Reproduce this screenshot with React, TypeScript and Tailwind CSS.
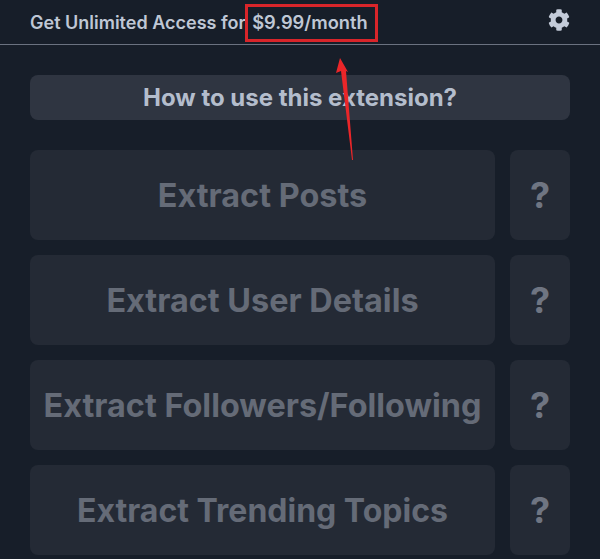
import { FaCog } from 'react-icons/fa';

const actions = [
  { label: 'Extract Posts', size: 'text-[32.4px]' },
  { label: 'Extract User Details', size: 'text-[32.4px]' },
  { label: 'Extract Followers/Following', size: 'text-[32.4px]' },
  { label: 'Extract Trending Topics', size: 'text-[32px]' },
];

export default function App() {
  return (
    <div className="relative h-[559px] w-[600px] overflow-hidden bg-[#171e29] font-['Inter',sans-serif]">
      {/* Header */}
      <header className="flex h-[45px] items-center justify-between border-b border-[#6b7280] px-[30px]">
        <div className="pt-[2px] text-[18px] font-semibold whitespace-nowrap text-[#bfc7d5]">
          Get Unlimited Access for <span className="ml-[2px] text-[18.3px]">$9.99/month</span>
        </div>
        <FaCog className="mb-[5px] text-[22px] text-[#c3cbd9]" />
      </header>

      {/* Buttons */}
      <main className="flex flex-col px-[30px] pt-[30px]">
        <button className="mb-[30px] h-[45px] rounded-lg bg-[#2f3541] text-[24px] font-bold text-[#b4bdcc]">
          How to use this extension?
        </button>
        <div className="flex flex-col gap-[15px]">
          {actions.map(({ label, size }) => (
            <div key={label} className="flex h-[90px] gap-[15px]">
              <button className={`flex-1 rounded-lg bg-[#242a35] pt-[2px] font-bold whitespace-nowrap text-[#656b77] ${size}`}>
                {label}
              </button>
              <button className="w-[60px] rounded-lg bg-[#242a35] text-[36px] font-bold text-[#6f7582]">
                ?
              </button>
            </div>
          ))}
        </div>
      </main>

      {/* Red annotation */}
      <div className="absolute left-[245px] top-[4px] h-[38px] w-[133px] border-[3px] border-[#d9252a]" />
      <svg className="absolute left-[325px] top-[50px]" width="40" height="115" viewBox="0 0 40 115">
        <path d="M15 8 L23 22 L21 21 L28 110 L27 110 L16 21 L11 23 Z" fill="#ea2629" />
      </svg>
    </div>
  );
}
